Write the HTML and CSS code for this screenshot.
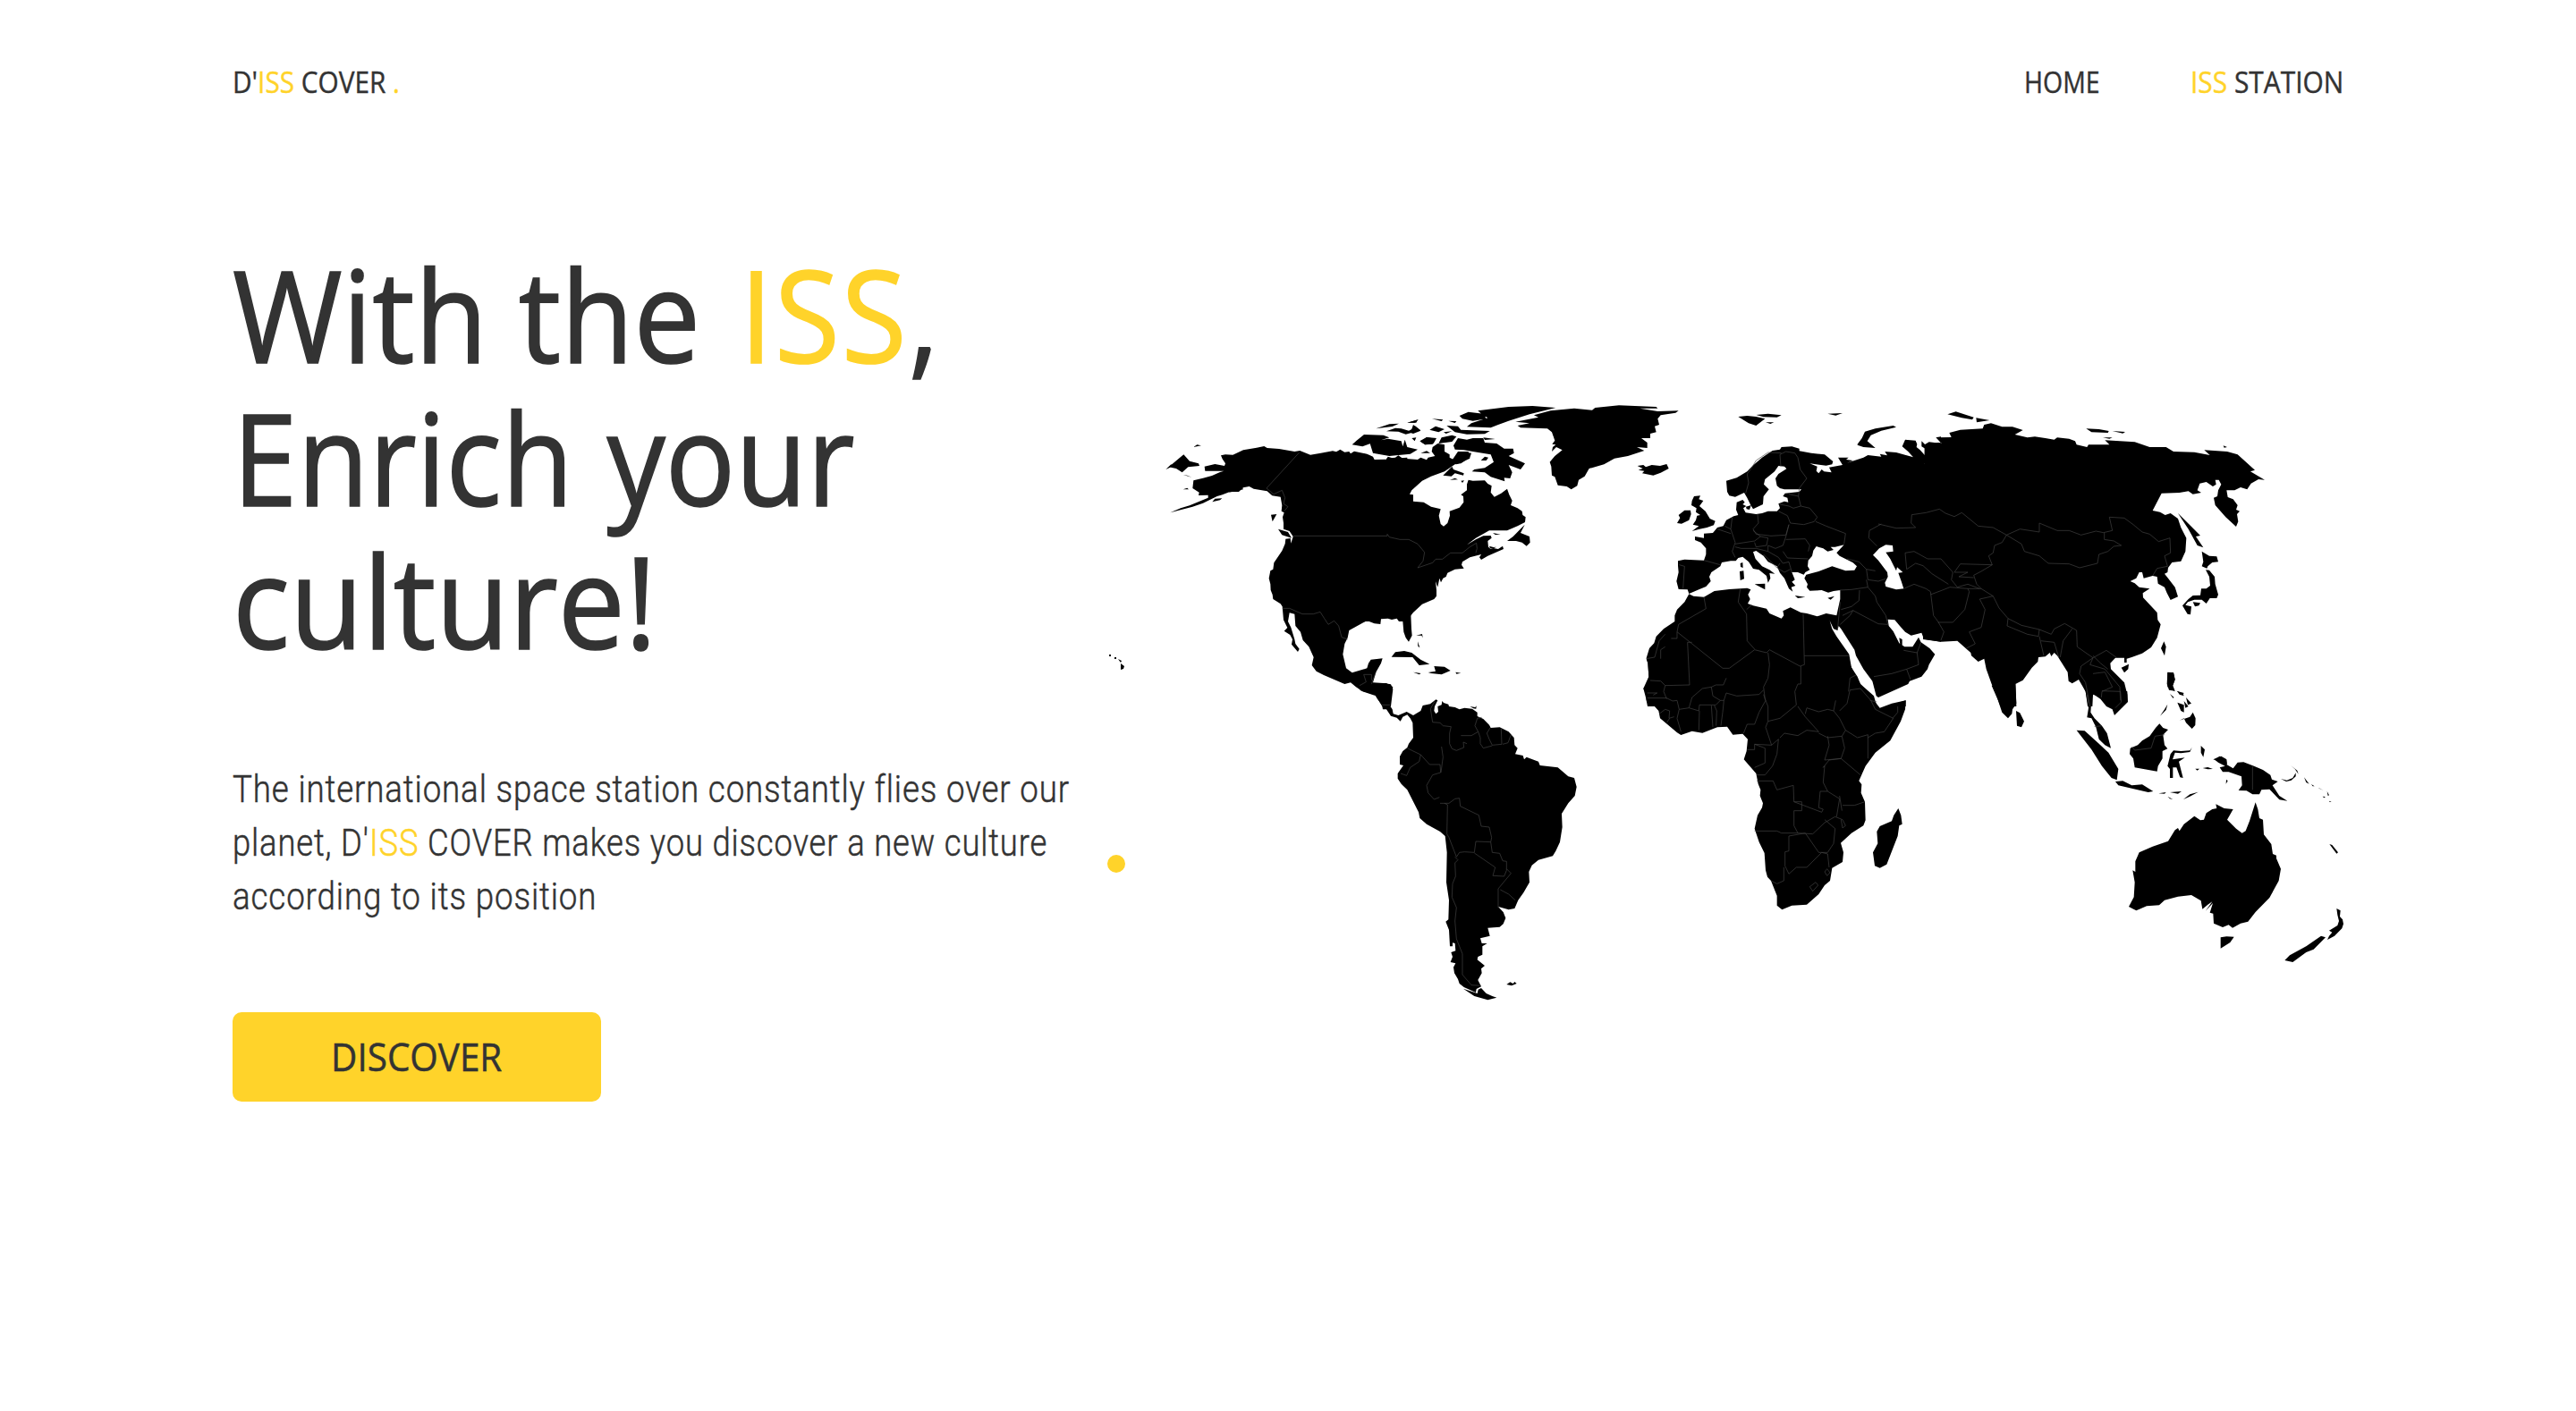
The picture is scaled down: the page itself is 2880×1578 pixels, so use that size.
FILE: index.html
```html
<!DOCTYPE html>
<html lang="en">
<head>
<meta charset="utf-8">
<title>D'ISS COVER</title>
<link rel="stylesheet" href="styles.css">
</head>
<body>
<header class="header">
  <a class="logo"><span class="fit fit-logo">D'<em>ISS</em> COVER <em>.</em></span></a>
  <nav class="nav">
    <a class="nav-home"><span class="fit fit-home">HOME</span></a>
    <a class="nav-station"><span class="fit fit-station"><em>ISS</em> STATION</span></a>
  </nav>
</header>
<main class="hero">
  <section class="intro">
    <h1 class="title">
      <span class="fit t1">With the <em>ISS</em>,</span>
      <span class="fit t2">Enrich your</span>
      <span class="fit t3">culture!</span>
    </h1>
    <p class="lead">
      <span class="fit p1">The international space station constantly flies over our</span>
      <span class="fit p2">planet, D'<em>ISS</em> COVER makes you discover a new culture</span>
      <span class="fit p3">according to its position</span>
    </p>
    <a class="button"><span class="fit fit-button">DISCOVER</span></a>
  </section>
  <section class="map">
    <svg class="world" viewBox="1236 440 1386 700" role="img" aria-label="World map">
      <!-- North America, west -->
      <g transform="translate(1290 440) scale(.333333)">
        <path d="M225,208 240,205 265,206 300,190 345,182 370,177 380,183 420,186 472,195 490,192 525,206 560,200 600,193 612,196 625,188 640,197 655,195 660,202 672,194 715,203 735,212 740,222 780,221 785,212 805,218 850,215V745L862,742 864,790 866,812 855,833 845,820 838,800 835,765 822,765 815,755 798,759 785,755 762,757 760,774 740,772 722,765 710,765 655,795 650,820 640,840 634,875 645,922 665,937 715,922 720,905 728,893 767,889 762,905 745,935 735,970 770,972 795,976 802,992 795,1050H766L745,1015 700,1000 678,985 660,970 640,975 570,945 545,932 530,912 536,885 520,850 500,828 492,800 475,780 472,740 455,736 450,765 460,785 472,825 475,840 488,857 483,867 462,842 465,825 457,810 437,797 448,786 435,760 431,715 425,706 400,690 398,675 392,660 391,640 386,620 391,595 400,590 403,568 430,528 440,505 442,488 458,486 460,503 467,480 455,462 435,455 435,435 432,415 437,400 428,395 430,375 425,347 397,343 380,328 335,320 320,312 300,316 285,330 255,330 230,340 212,345 165,368 130,380 55,400 90,385 120,376 182,350 182,341 150,342 152,332 130,318 133,292 165,284 195,276 222,264 235,260 172,260 170,245 205,237 237,243 240,235 230,220z"/>
        <path d="M100,205 120,227 150,235 153,243 115,247 95,265 75,252 50,247zM40,255 58,238 65,244zM133,180 145,172 159,175zM98,273 112,275 127,281zM98,322 112,317 117,322zM196,364 205,353 229,352 222,358zM252,332 262,318 290,306 300,322zM393,407 412,405 398,430zM417,455 450,465 462,485 430,475zM665,172 680,158 705,138 770,140 790,148 735,165 700,178zM725,168 745,160 785,152 830,160 835,178 842,155 850,180 885,188 860,203 790,210 735,200zM745,118 790,103 822,101 800,111zM780,127 810,116 830,118 860,127 875,108 895,124 845,137 820,128zM850,98 885,88 880,98zM865,150 880,148 875,160zM895,162 915,147 945,152 935,170 910,172zM797,884 810,868 840,864 865,870 895,893 925,908 890,912 868,885zM870,935 896,939 890,943zM920,936 945,932 940,915 975,917 995,930 965,943 930,939zM1012,935 1030,938 1015,941zM880,812 900,807 902,820 898,812zM885,832 892,853 886,848z"/>
      </g>
      <!-- North America, east; Greenland; Iceland -->
      <g transform="translate(1500 440) scale(.333333)">
        <path d="M150,218 180,215 190,208 205,218 255,222 265,215 285,223 290,215 313,210 302,195 305,180 322,168 345,172 345,195 362,205 362,215 375,222 400,195 435,200 430,215 400,235 380,238 345,262 300,278 270,293 235,325 228,338 240,340 240,362 275,365 300,380 332,388 326,410 332,438 342,446 355,435 363,410 362,395 395,383 409,365 408,345 400,340 420,325 420,305 425,290 440,293 480,292 490,303 503,310 500,332 512,347 535,335 555,320 562,340 572,360 567,375 590,385 605,395 607,408 617,415 615,432 590,445 555,460 495,460 450,485 420,508 450,490 475,478 500,477 503,485 490,495 492,515 500,522 512,520 525,522 540,512 543,522 490,545 468,558 462,550 468,540 430,550 405,565 402,575 410,587 380,590 355,602 350,615 340,620 330,640 318,655 318,680 310,690 270,707 240,735 230,748H150z"/>
        <path fill="#fff" d="M500,488 530,485 540,512 515,508 505,520 492,510zM315,630 322,650 328,620 335,640 328,652 318,660z"/>
        <path d="M495,512 512,517 518,514 510,522 498,520zM507,468 533,473 515,474zM614,440 600,468 630,480 632,500 620,512 605,500 585,495 555,495 575,480zM340,275 370,245 375,255 410,268 408,275 380,268 368,278zM363,290 380,284 390,289zM400,293 411,292 405,300zM395,75 425,62 475,68 485,85 440,92 405,85zM457,58 560,45 640,42 718,48 630,70 560,92 525,105 500,115 420,112 435,100 490,82 470,70zM352,108 390,110 400,122 497,126 480,136 420,137 380,130zM375,175 390,150 420,155 440,150 475,150 480,165 520,168 545,185 575,185 578,200 560,210 615,235 600,255 560,240 572,265 565,285 545,283 547,295 500,280 480,265 437,262 445,255 480,250 510,230 500,205 440,195 410,190 380,188zM475,148 515,153 480,156zM467,225 480,212 492,215 485,225zM365,232 390,195 425,195 430,218 385,238zM325,168 335,148 370,140 385,145 370,162zM295,122 315,110 345,120 325,130zM303,85 340,88 335,93zM358,92 385,93 380,99zM342,130 370,127 350,135zM262,160 285,147 318,150 308,168 280,172zM265,200 285,193 297,200zM220,98 258,88 245,98zM220,128 235,120 240,105 265,125 240,135z"/>
        <path d="M583,95 660,80 645,73 700,58 780,50 840,56 850,48 930,40 1055,45 1060,50 1000,50 1060,60 1130,58 1120,65 1070,73 1060,85 1065,105 1050,110 1055,130 1035,135 1035,150 1005,150 1025,165 1025,183 990,180 1015,192 960,210 915,218 880,238 830,252 815,278 795,290 790,310 770,322 755,312 725,308 715,280 705,275 703,245 698,230 715,210 740,190 720,180 705,195 708,180 718,172 706,170 715,158 705,130 690,118 600,115 590,108 630,100z"/>
        <path d="M992,243 1012,240 1020,247 1040,240 1068,243 1090,237 1097,252 1070,266 1045,275 1008,268 1015,260 995,257 1010,252z"/>
      </g>
      <!-- North American borders -->
      <g transform="translate(1290 440) scale(.333333)">
        <path class="b" d="M488,198 378,318 402,338 430,325 440,350 435,370 450,380 437,395M465,478H783V472L790,482 825,490H855L885,505 908,533 903,562 885,585 935,568 945,556H968L995,535H1035L1060,515 1082,502 1084,520 1080,535M431,721H455L498,740H535L558,733 572,755 585,775 605,763 620,780 630,818 650,825M704,943H730V962M745,935 735,960 725,995 743,1012M704,943 712,968 690,980M725,995 745,1005 780,990 800,985"/>
      </g>
      <!-- South America -->
      <g transform="translate(1520 740) scale(.333333)">
        <path d="M0,95 52,112 60,125 75,145 78,160 90,160 105,182 125,188 137,200 145,185 160,178 170,190 178,205 180,255 165,275 160,288 145,300 135,318 135,345 147,348 140,358 128,375 128,392 140,410 160,430 198,505 202,525 225,545 270,570 287,585 293,640 291,740 300,800 298,865 289,872 300,900 303,955 312,955 312,943 320,945 322,970 307,975 312,990 305,1008 322,1012 315,1025 318,1045 330,1065 335,1080 350,1092 390,1110 392,1098 408,1090 397,1068 410,1045 408,1030 420,1020 395,1000 397,990 412,983 412,955 428,945 410,945 405,928 437,920 430,893 470,890 482,880 490,860 482,840 465,822 500,832 520,828 532,800 550,775 570,740 568,705 578,683 600,665 648,652 658,635 672,605 680,555 678,510 700,475 722,450 728,420 720,390 700,385 665,355 605,348 600,335 560,320 552,328 548,315 522,310 530,290 520,280 518,255 500,235 470,220 440,222 435,212 415,192 395,183 395,170 378,158 352,155 335,160 320,153 300,150 298,143 282,138 277,132 275,145 262,150 264,168 256,175 250,165 252,150 262,130 256,127 237,142 212,147 205,165 180,180 158,168 130,180 113,175 110,160 100,145 105,115 112,85 90,72 45,73z"/>
        <path d="M348,1097 395,1113 398,1100 408,1095 425,1113 445,1122 460,1127 430,1135 385,1122zM493,1083 505,1075 515,1080 520,1074 527,1080 510,1087zM370,150 388,153 392,148 391,158 382,157z"/>
        <path class="b" d="M75,145H102M252,133 238,158 245,203 270,205 280,215 307,218 302,240V275L310,292 325,298 350,288 348,270 360,275M340,248 375,248 398,235 387,215 395,190 410,187M398,235 405,255V275L415,290 445,282M438,222 427,240 435,260 445,280 477,277 475,225M480,277 498,272 508,245M160,290 180,300 205,312 235,345 270,345 272,372 245,380 225,415 230,440 250,462 268,455M205,312 200,335 170,355 158,382 138,375M275,285 280,320 273,372M270,475 300,475 320,460 335,458 338,485 400,515 408,552 435,555 443,590 440,605 390,603 385,640 352,638 335,640 325,655 300,590 293,578 295,480 285,475M440,605 445,640 470,643 480,668 493,670 493,700 485,720 447,718 455,690 385,642M493,695 508,710 465,762V825M472,765 500,780 522,800M320,655 330,665 320,675 322,720 312,745 310,790 325,825 320,870 325,930 345,980 345,1050 375,1085 408,1087"/>
      </g>
      <!-- Europe, Middle East, North Africa -->
      <g transform="translate(1820 440) scale(.333333)">
        <path d="M330,293 365,283 400,262 418,243 450,215 485,192 510,188 515,180 550,178 575,185 575,193 615,200 660,205 688,228 685,238 665,242 610,235 635,245 632,260 640,268 650,255 658,262 683,265 675,248 720,240 705,215 740,215 732,222 755,225 735,233 790,215 805,207 850,212 845,203 870,208 862,195 900,198 957,214 940,195 920,178 930,155 965,158 970,170 968,180 980,190 1003,215 995,237 1015,236 1018,215 1000,205 1002,188 985,178 985,160 1000,175 1040,165 1050,166V833L993,824 985,803 950,812 930,800 912,780 895,760 872,758 875,780 890,798 910,838 928,850 955,850 975,818 983,835 1012,855 1030,875 1010,910 1005,925 985,950 945,965 940,975 895,995 840,1020 833,1015 820,965 790,925 765,880 760,860 715,790 707,780 703,795 690,790 677,763 685,790 700,815 742,875 750,920 770,950 780,975 825,1015 835,1050H66L60,1020 52,990 63,980 70,950 67,905 62,888 72,855 88,838 95,815 120,790 157,765 157,745 165,725 190,700 205,673 220,680 255,683 290,663 340,657 400,653 412,658 403,675 410,690 402,705 420,712 465,722 475,738 515,755 523,745 520,730 545,718 580,735 600,738 635,748 665,738 700,745 712,690 712,660 690,663 672,668 650,660 610,662 600,650 603,640 592,620 598,608 640,597 685,580 730,595 760,593 768,580 755,568 710,545 700,535 725,508 695,515 680,515 690,525 670,530 655,520 632,513 622,527 618,545 605,560 603,580 610,592 595,600 590,608 570,600 550,600 560,625 550,632 562,645 548,650 553,665 540,655 525,620 510,602 500,580 470,565 455,545 430,528 420,532 428,555 450,580 475,592 493,605 475,603 478,620 470,635 465,612 440,592 420,588 405,565 385,548 370,552 362,562 345,562 315,567 310,580 280,600 273,615 278,630 262,648 240,657 205,672 200,658 170,657 163,630 170,600 168,578 168,562 190,557 255,560 262,540 262,520 245,500 225,492 225,480 255,485 255,470 285,468 300,450 320,445 330,425 355,412 370,408 363,390 365,365 385,357 392,365 385,372 397,378 387,385 395,400 430,405 450,402 470,395 500,395 510,385 505,370 525,362 538,365 535,350 520,345 527,335 575,330 582,322 525,322 510,318 500,310 495,285 505,270 532,253 525,245 505,243 492,262 460,288 456,305 473,322 455,345 453,372 420,388 412,375 400,350 390,333 360,347 340,343 333,330z"/>
        <path fill="#fff" d="M843,520 865,508 888,510 890,530 865,533 880,555 890,575 900,595 903,583 922,600 907,602 917,630 925,655 900,658 865,648 862,635 872,615 870,600 840,560 822,542z"/>
        <path d="M215,360 222,345 243,343 238,355 253,360 240,378 260,395 275,420 293,428 288,442 265,450 240,455 215,462 238,445 218,440 228,425 232,410 243,408 228,398 230,385 213,375zM165,435 175,418 170,408 190,392 210,392 212,405 205,425 180,437zM396,380 413,375 408,390 398,388zM377,570 385,567 386,585 378,582zM375,597 388,595 390,622 377,627zM425,640 460,638 460,658zM560,678 595,683 570,687zM670,686 693,680 680,692zM370,78 400,75 430,78 460,85 430,108 405,100zM430,72 470,68 515,73 500,80 455,79zM462,97 490,97 478,102zM670,68 720,66 697,74zM770,170 785,150 795,128 830,118 890,108 900,113 850,125 815,140 803,160 830,183 790,180 770,173zM1033,148 1050,145V165zM910,820 920,825 920,845 913,842z"/>
      </g>
      <!-- Africa -->
      <g transform="translate(1820 640) scale(.333333)">
        <path d="M62,290 67,305 70,350 52,390 62,405 62,430 85,445 103,465 108,490 165,538 178,546 215,533 250,539 300,520 333,518 352,545 385,542 402,560 398,600 389,628 430,675 437,710 445,730 443,750 453,775 450,790 435,815 425,860 440,905 458,942 462,1000 468,1022 480,1035 500,1085 500,1118 517,1132 550,1118 600,1115 640,1080 660,1050 678,1035 685,992 720,972 723,940 714,908 750,875 790,850 797,832 795,770 782,740 784,712 775,700 797,650 830,605 880,565 915,500 930,460 932,430 885,440 845,455 822,425 780,375 745,310 740,280z"/>
        <path d="M907,792 916,815 920,845 910,850 905,885 868,980 845,992 828,985 822,940 838,910 835,870 845,852 885,835 892,815z"/>
        <path class="b" d="M65,405H98L85,412M65,422H130L150,432 165,430 172,460 205,455M105,475 125,460 140,465 138,490 155,485M172,460 165,490 178,535M140,490 130,505M125,380 120,400 130,425M205,455 215,420 250,390 280,385 285,415 310,430 295,445H240L238,465 205,455M240,465 238,530M280,447 285,520M290,447 298,465 296,515M310,430 322,430 318,470 312,515M322,430 330,405 365,415 440,410 455,395M280,385 295,378 320,378 330,355M455,410 462,430 440,470 425,510 400,510 388,540M470,270 475,310 470,355 455,385 460,425 470,450 470,500 462,520 482,580 425,577M470,500 510,490 565,445 560,400 570,375H580V315M425,577V595H400M482,580 505,560 500,610 485,650 460,680 432,680M425,577 460,590V640L425,655M432,700H487L500,730 555,715 557,770 650,805 655,795 640,790 645,735 670,735 655,705 660,650 655,655 675,630 715,625 780,680M570,450 595,485 640,535 600,530 570,548 525,540 510,555M595,475 600,455 640,468 670,460 690,465 697,430M690,465 710,490 730,530 770,555 805,545V625M670,550 675,580 660,630 715,625 727,590 718,550 730,530M745,395 735,440 710,465M745,395 780,390 815,430 830,460 890,490 860,535 830,540 805,555M905,445V470L888,490M812,430 835,435M640,540 670,555 718,550M557,770H583V800H557V850L570,875 515,875 500,868H425M570,875 620,878 660,840 695,820 720,830 730,850 720,858 715,830M660,830 695,860 690,910 670,940 640,940 595,875 540,885V935L527,938V985L540,1012 565,990 600,990 650,940 670,945 675,990M523,990V1035L500,1045 480,1035M670,735 710,760 700,820M720,782H760L795,770M710,750 718,800M660,1005 668,995 678,1008 668,1018zM610,1055 630,1040 638,1050 620,1070z"/>
      </g>
      <!-- Asia -->
      <g transform="translate(2100 440) scale(.333333)">
        <path d="M155,172 170,163 212,168 195,148 245,147 238,132 275,122 350,118 355,105 378,100 415,112 450,112 485,123 458,138 500,148 525,145 560,150 590,155 600,148 640,152 660,160 665,172 700,180 705,172 775,172 760,157 860,163 910,180 965,180 990,195 1060,197 1112,207 1093,190 1170,195 1205,205 1263,257 1248,262 1296,290 1275,288 1250,302 1237,322 1215,315 1195,325 1168,325 1172,348 1190,355 1205,375 1200,390 1212,395 1203,405 1207,430 1200,447 1165,415 1130,375 1125,350 1137,345 1140,325 1150,305 1142,290 1130,290 1133,305 1122,312 1100,297 1078,302 1070,325 1083,333 1055,338 1040,328 1010,333 950,335 920,393 945,398 962,408 980,402 1005,420 1015,450 1033,485 1030,530 1015,563 985,567 972,585 970,600 960,605 972,620 995,650 1005,682 980,693 968,670 960,650 938,638 935,615 920,612 890,620 885,600 875,600 865,620 845,630 860,637 875,650 910,655 887,670 888,685 935,735 937,760 947,775 935,820 915,852 885,872 850,885 833,890 833,903 825,903 825,887 795,887 778,905 780,925 825,970 835,1010 835,1035 815,1050H780L735,1015 720,1010 718,1050H702L695,1000 672,960 650,973 638,965 635,935 600,880 590,870 580,882 575,870 560,883 537,885 535,900 515,920 485,962 460,975 463,1050H410L380,975 362,925 355,890 335,900 312,880 310,870 265,830 210,833 150,825z"/>
        <path d="M232,70 260,61 320,80 315,88 280,82zM328,82 373,90 330,97zM697,118 740,120 773,126 770,132 715,130zM785,126 828,129 820,134zM753,148 785,148 775,152zM1157,175 1170,180 1160,182zM1005,402 1045,442 1080,477 1065,480 1090,517 1070,510 1040,455zM1085,530 1110,545 1135,547 1140,565 1120,567 1105,580 1102,587 1085,580 1090,565zM1098,592 1110,593 1128,615 1130,640 1140,675 1135,687 1112,687 1100,705 1085,692 1060,692 1038,700 1030,710 1050,715 1047,742 1037,740 1020,712 1040,690 1055,678 1080,677 1083,655 1100,655 1113,645 1110,615zM1055,700 1080,703 1075,712 1062,715zM958,832 965,850 960,880 948,855zM815,920 840,908 838,925 825,937zM970,935 990,937 995,960 985,985 995,1000 970,985zM1000,998 1025,1005 1020,1012zM30,1050 92,1030V1050z"/>
      </g>
      <!-- South and Southeast Asia -->
      <g transform="translate(2120 640) scale(.333333)">
        <path d="M400,375 403,440 390,460 388,475 375,490 355,470 340,425 320,380zM402,465 415,472 429,500 420,520 405,515zM612,350 775,400 777,435 732,480 725,460 705,450 685,425 660,408 655,430 652,470 665,490 690,515 707,540 720,590 700,580 680,560 670,520 655,490 640,487 645,455 635,400zM605,530 632,532 680,575 712,605 745,660 740,697 722,690 690,650 655,595zM735,702 760,700 790,715 825,712 862,735 845,738 790,725 745,715zM785,590 810,580 825,565 850,550 870,522 883,508 895,522 912,528 895,545 900,580 910,592 893,600 893,625 878,650 875,668 800,655 795,625 783,610zM880,742 905,738 900,743zM918,738 957,735 945,743zM910,752 928,762 918,760zM963,762 985,745 1013,737 985,752zM930,598 955,600 985,598 992,588 985,603 955,607 935,605 927,628 968,622 948,635 962,690 952,688 940,655 928,655 928,690 918,690 918,660 910,650 920,610zM1022,582 1035,595 1030,620 1022,605zM1003,659 1017,659 1010,665zM1028,657 1045,654 1062,660 1045,661zM1063,628 1090,617 1108,628 1110,645 1085,635zM910,443 905,462 885,482 900,460zM950,497 985,485 995,470 1004,490 1003,513 992,525 972,505 965,490zM910,337 930,337 935,360 928,380 935,398 915,395 908,375zM918,408 932,420 928,422zM942,398 962,408 965,415 950,410zM972,420 990,440 978,445zM943,437 965,445 965,470 955,465zM965,432 980,450 970,455z"/>
        <path class="b" d="M665,518 690,515M790,585 800,597 855,590 868,550 900,545M735,455 755,435 752,400 690,398M645,440 640,410"/>
      </g>
      <!-- Borders of Europe, the Middle East and the Sahara -->
      <g transform="translate(1820 440) scale(.333333)">
        <path class="b" d="M395,335 405,300 400,270 415,250 430,225 470,198 515,200M513,245 510,205 530,195 560,200 570,215 578,255 600,285 575,318M575,318 572,345 580,378 555,385 540,378 510,372M580,378 610,385 635,415 625,430 590,440 545,435 535,410 505,395M572,345 540,338M435,405 438,435 420,455 430,472 480,478 530,475 540,440M420,460 445,480 425,495 360,505M445,480 470,485 465,510 430,515 425,500M540,440 530,480 520,510 495,520 470,510 470,530 505,550 520,570 540,565 550,600M530,490 595,488 610,510 605,530M520,530 535,552 605,555M630,430 665,445 730,470 725,505M350,415 345,455 360,500 350,530 360,550M300,455 345,470M255,560 310,575M172,575 190,580 185,655M345,455 325,445M470,530 430,520 380,520 360,515M455,540 500,585 510,570M500,585 525,600 545,590M735,555 775,565 800,590 830,595M800,590 805,625 840,630 865,622M710,660 750,658 805,650 800,625M777,660 775,695 750,715 715,725M805,650 830,680 835,700 865,745 872,775 840,773 755,728 745,745 712,775M755,728 720,745M703,795 712,700M835,512 808,485 810,460 850,438M925,862 970,870 983,835M970,870 975,910 935,925 885,940 825,950M935,925 948,960M255,683 262,722 170,775 165,800 318,922 340,922 425,860 465,870 475,860 577,915 592,910 588,740M377,655 370,700 398,740 400,830 425,858M415,710 398,725M592,880H740M200,835H215M165,800V822H145M125,808 105,830 90,885 62,890M110,890V860L125,850M200,835 207,978 125,980 110,965 75,963M765,945 745,955 740,1000"/>
      </g>
      <!-- Asian borders -->
      <g transform="translate(2100 440) scale(.333333)">
        <path class="b" d="M0,438 60,452 125,450 110,435 112,407 160,400 205,388 225,402 255,413 280,400 335,445 385,450 430,475 475,455 540,465V435L600,460 640,460 680,475 730,462 755,467 785,460 775,415 825,418 855,440 885,465 910,472 940,497 978,485 980,535 960,545 970,580 935,587 920,612M430,475 480,505 490,530 540,545 570,570 640,572 675,585 735,570 740,540 770,530 790,513 815,510 790,495 758,490V467M430,475 415,500 390,510 385,535 370,545 382,575 345,597 320,610 330,640 345,655 385,680 405,720 435,755M382,575 275,572 255,600 300,600 270,615 320,618M95,590 90,535 120,530 165,555 210,555 250,600 245,625 265,650 300,640 340,655M95,590 125,570 150,578 180,605 235,640M85,655 120,640 160,655 175,665 185,745 200,765 220,800 210,828M175,675 215,660 240,650 300,655 305,665 290,725 250,768 200,768M385,680 340,690 358,725 345,785 305,800 325,840 295,855M435,755 432,780 500,808 537,815 540,792 480,778 435,755M540,792 580,808 590,790 625,772 665,795 667,850 720,887 765,862 800,887M540,815 555,880M545,830 590,835 605,885M650,790 620,830 610,885M720,887 680,915 675,940 695,970 710,1050M720,887 710,910 760,925 810,985 812,1030M720,940 760,935 785,985 750,1000 748,1020M720,880 745,905 770,925M300,655 345,655"/>
      </g>
      <!-- Oceania -->
      <g transform="translate(2300 800) scale(.333333)">
        <path d="M665,292 673,315 678,345 690,350 693,400 718,432 723,465 735,470 735,480 750,515 743,555 712,612 665,660 640,692 615,698 588,713 575,703 555,711 525,698 523,665 512,662 522,630 497,657 520,625 505,635 487,650 482,622 450,603 405,608 360,620 342,637 300,640 265,655 240,642 257,610 260,560 253,520 262,525 262,490 275,460 320,440 372,422 395,385 405,378 410,388 425,365 460,338 480,352 492,350 500,328 520,315 535,312 532,298 560,312 590,315 570,350 600,380 620,395 632,388 645,355zM548,745 568,742 593,743 580,762 548,782zM527,148 545,137 567,148 568,165 590,178 605,158 625,157 660,170 690,183 715,200 720,215 740,222 722,235 745,270 772,287 745,283 712,248 685,250 678,265 655,265 635,253 608,252 620,235 618,205 575,190 555,190 545,175 563,170 540,158zM750,213 770,218 790,210 800,193 800,205 785,218 768,222zM783,168 797,180 809,197 805,185zM828,208 845,230 835,225zM875,242 893,252 880,246zM890,272 900,273 895,277zM912,287 920,290 914,291zM913,432 922,435 942,460 937,464zM937,648 950,655 948,675 957,685 960,700 955,715 930,740 906,753 912,740 922,728 912,722 940,705 945,690 940,670zM885,740 900,745 860,785 835,795 790,828 763,822 780,805 835,775zM567,215 572,220 566,230z"/>
        <path d="M905,255 912,268 908,270zM852,231 863,238 857,238z"/>
        <path class="b" d="M655,170V250"/>
      </g>
      <!-- Hawaii -->
      <path d="M1240,732h2v2h-2zM1246,735h2v2h-2zM1250,737l4,2-1,2zM1253,742l4,3-1,3-3,1z"/>
    </svg>
    <span class="marker"></span>
  </section>
</main>
</body>
</html>
```
FILE: styles.css
```css
* { box-sizing: border-box; }
body {
  margin: 0;
  min-height: 1578px;
  background: #fff;
  color: #333;
  font-family: "Open Sans", "Noto Sans", sans-serif;
}
em { font-style: normal; color: #ffd32a; }
.fit { display: block; width: max-content; white-space: nowrap; transform-origin: left center; }
.header {
  display: flex;
  justify-content: space-between;
  height: 184px;
  padding: 0 260px;
  font-size: 32px;
  line-height: 184px;
  -webkit-text-stroke: .4px;
}
.nav { display: flex; }
.nav-home { width: 186px; }
.nav-station { width: 171px; }
.fit-logo { transform: scaleX(.93); }
.fit-home { transform: scaleX(.89); }
.fit-station { transform: scaleX(.935); }
.hero { display: flex; padding-left: 260px; }
.intro { width: 976px; padding-top: 87px; }
.title { margin: 0; font-size: 142px; font-weight: 400; line-height: 160px; -webkit-text-stroke: 1.6px; }
.title em { margin-left: 10px; letter-spacing: 2px; }
.t1 { transform: scaleX(.936); }
.t2 { transform: scaleX(.918); word-spacing: 4px; }
.t3 { transform: scaleX(.941); }
.lead {
  margin: 102px 0 0;
  font-family: Roboto, sans-serif;
  font-size: 42px;
  font-weight: 300;
  line-height: 60px;
  letter-spacing: 1px;
  -webkit-text-stroke: .5px;
}
.p1 { transform: scaleX(.873); }
.p2 { transform: scaleX(.866); }
.p3 { transform: scaleX(.874); }
.button {
  display: flex;
  justify-content: center;
  width: 412px;
  height: 100px;
  margin-top: 99px;
  border-radius: 10px;
  background: #ffd32a;
  font-size: 43px;
  line-height: 100px;
  -webkit-text-stroke: .5px;
}
.fit-button { transform: scaleX(.94); transform-origin: center; }
.map { position: relative; width: 1386px; padding-top: 256px; }
.world { display: block; width: 1386px; height: 700px; }
.world .b { fill: none; stroke: #444; stroke-width: 2; }
.marker {
  position: absolute;
  left: 2px;
  top: 772px;
  width: 20px;
  height: 20px;
  border-radius: 50%;
  background: #ffd32a;
}
```
